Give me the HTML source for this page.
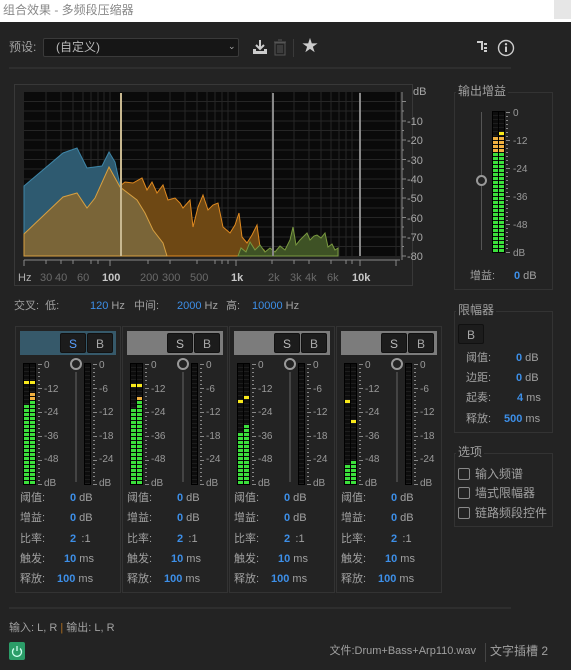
<!DOCTYPE html>
<html><head><meta charset="utf-8"><style>
*{margin:0;padding:0;box-sizing:border-box}
body{width:571px;height:670px;background:#232323;font-family:"Liberation Sans","Noto Sans CJK SC",sans-serif;font-size:11px;color:#a0a0a0;position:relative;overflow:hidden}
.a{position:absolute}
.t{position:absolute;white-space:nowrap;line-height:12px}
.v{color:#3d8fe8}
.box{position:absolute;border:1px solid #333}
.btn{position:absolute;background:#1c1c1c;border:1px solid #111;border-radius:2px;color:#a8a8a8;font-size:12px;text-align:center;line-height:20px}
.col{position:absolute;background:#0d0d0d;background-image:repeating-linear-gradient(to bottom,transparent 0 3px,#1d1d1d 3px 4px)}
.g{position:absolute;left:0;right:0;bottom:0;background:repeating-linear-gradient(to top,#3be03b 0 3px,#0d0d0d 3px 4px)}
.pk{position:absolute;left:0;right:0;height:3px}
.sc{position:absolute;color:#9a9a9a;font-size:10px}
.cb{position:absolute;width:12px;height:12px;border:1px solid #8a8a8a;border-radius:2px}
</style></head><body>
<div class="a" style="left:0;top:0;width:571px;height:22px;background:#fff"></div>
<div class="t" style="left:3px;top:4px;color:#888;font-size:12px">组合效果 - 多频段压缩器</div>
<div class="a" style="left:554px;top:0;width:17px;height:19px;background:#e6e6e6"></div>

<div class="t" style="left:9px;top:41px;font-size:12px">预设:</div>
<div class="a" style="left:43px;top:38px;width:196px;height:19px;background:#161616;border:1px solid #3a3a3a;border-radius:2px"></div>
<div class="t" style="left:56px;top:41px;font-size:12px;color:#b8b8b8">(自定义)</div>
<div class="t" style="left:228px;top:40px;font-size:9px;color:#aaa">⌄</div>
<svg class="a" style="left:250px;top:38px" width="20" height="20"><path d="M10 2v9M6 7l4 4 4-4" stroke="#ccc" stroke-width="2" fill="none"/><path d="M3 11v5h14v-5h-3v2H6v-2z" fill="#ccc"/></svg>
<svg class="a" style="left:273px;top:39px" width="14" height="18"><rect x="2" y="4" width="10" height="12" fill="none" stroke="#555"/><path d="M1 3h12M5 1h4M5 6v8M7 6v8M9 6v8" stroke="#555"/></svg>
<div class="a" style="left:293px;top:39px;width:1px;height:18px;background:#3a3a3a"></div>
<div class="t" style="left:302px;top:38px;font-size:16px;color:#ccc;line-height:18px">★</div>
<svg class="a" style="left:476px;top:40px" width="12" height="14"><path d="M1 2h5v8" stroke="#ccc" stroke-width="2" fill="none"/><rect x="8" y="3" width="3" height="2" fill="#ccc"/><rect x="8" y="7" width="3" height="2" fill="#ccc"/><rect x="8" y="10" width="3" height="2" fill="#ccc"/></svg>
<svg class="a" style="left:497px;top:39px" width="18" height="18"><circle cx="9" cy="9" r="7.5" fill="none" stroke="#ccc" stroke-width="1.4"/><rect x="8" y="7.5" width="2" height="5.5" fill="#ccc"/><circle cx="9" cy="5.2" r="1.2" fill="#ccc"/></svg>
<div class="a" style="left:9px;top:67px;width:502px;height:2px;background:#2e2e2e"></div>

<div class="box" style="left:14px;top:84px;width:399px;height:202px;border-color:#383838"></div>
<svg class="a" style="left:0;top:0" width="440" height="300">
<rect x="24" y="92" width="376" height="164" fill="#0a0a0a"/>
<g stroke="#262626" stroke-width="1">
<path d="M24 101.5H400M24 111H400M24 121H400M24 130.5H400M24 140H400M24 150H400M24 159.5H400M24 169H400M24 179H400M24 188.5H400M24 198H400M24 208H400M24 217.5H400M24 227H400M24 237H400M24 246.5H400"/>
<path d="M46 92V256M61 92V256M73 92V256M83 92V256M91 92V256M98 92V256M104 92V256M110 92V256M148 92V256M170 92V256M185 92V256M197 92V256M207 92V256M215 92V256M222 92V256M228 92V256M236 92V256M272 92V256M294 92V256M309 92V256M321 92V256M331 92V256M339 92V256M346 92V256M352 92V256M360 92V256M396 92V256"/>
</g>
<path d="M24 186L63 153L77 148L87 168L102 166L109 152L115 162L120 185L120 256L24 256Z" fill="#2e5a70" stroke="#3e86a8" stroke-width="1"/>
<path d="M120 186L125 182L133 183L142 178L147 190L152 182L157 193L163 185L168 200L175 198L180 203L183 208L190 200L193 227L198 207L203 195L208 210L213 205L218 203L223 227L230 233L235 225L239 213L242 237L247 243L252 235L257 225L260 247L264 250L267 256L120 256Z" fill="#6e4814" stroke="#e08a20" stroke-width="1"/>
<path d="M238 256L241 248L246 252L250 242L255 250L260 245L265 252L270 248L275 252L280 246L285 250L290 240L293 227L296 245L300 240L304 236L307 233L310 240L314 236L317 235L321 238L325 233L328 247L332 244L335 250L338 248L338 256Z" fill="#3e5225" stroke="#7a9a40" stroke-width="1"/>
<path d="M24 234L63 197L77 193L87 208L95 198L109 167L120 187L137 200L145 213L153 230L163 243L167 256L24 256Z" fill="#7a6538" stroke="#d8a040" stroke-width="1"/>
<path d="M121 93V256" stroke="#c8b890" stroke-width="2"/>
<path d="M273 93V256M360 93V256" stroke="#888" stroke-width="2"/>
<path d="M402 92V260M402 101.5h4M402 121h4M402 140h4M402 159.5h4M402 179h4M402 198h4M402 217.5h4M402 237h4M402 256h4M402 111h2M402 130.5h2M402 150h2M402 169h2M402 188.5h2M402 208h2M402 227h2M402 246.5h2" stroke="#888"/>
<path d="M24 260H400M24 260v6M46 260v4M61 260v4M73 260v4M91 260v4M98 260v4M110 260v6M148 260v4M170 260v4M197 260v4M215 260v4M222 260v4M228 260v4M236 260v6M272 260v4M294 260v4M309 260v4M331 260v4M346 260v4M352 260v4M360 260v6M396 260v6" stroke="#888"/>
<g font-size="11" fill="#a8a8a8" font-family="Liberation Sans,sans-serif">
<text x="413" y="95">dB</text><text x="407" y="125">-10</text><text x="407" y="144">-20</text><text x="407" y="164">-30</text><text x="407" y="183">-40</text><text x="407" y="202">-50</text><text x="407" y="222">-60</text><text x="407" y="241">-70</text><text x="407" y="260">-80</text>
<text x="18" y="281" fill="#b0b0b0">Hz</text>
<g fill="#6a6a6a"><text x="40" y="281">30</text><text x="55" y="281">40</text><text x="77" y="281">60</text><text x="140" y="281">200</text><text x="162" y="281">300</text><text x="190" y="281">500</text><text x="268" y="281">2k</text><text x="290" y="281">3k</text><text x="305" y="281">4k</text><text x="327" y="281">6k</text></g>
<g fill="#c8c8c8" font-weight="bold"><text x="102" y="281">100</text><text x="231" y="281">1k</text><text x="352" y="281">10k</text></g>
</g>
</svg>
<div class="t" style="left:14px;top:300px">交叉:&nbsp;&nbsp;低:</div>
<div class="t" style="left:90px;top:300px"><span class="v">120</span> Hz</div>
<div class="t" style="left:134px;top:300px">中间:</div>
<div class="t" style="left:177px;top:300px"><span class="v">2000</span> Hz</div>
<div class="t" style="left:226px;top:300px">高:</div>
<div class="t" style="left:252px;top:300px"><span class="v">10000</span> Hz</div>

<div id="bands"></div>

<div class="box" style="left:454px;top:92px;width:99px;height:198px"></div>
<div class="t" style="left:456px;top:85px;background:#232323;padding:0 2px;font-size:12px">输出增益</div>
<div class="a" style="left:481px;top:112px;width:1px;height:138px;background:#555"></div>
<div class="a" style="left:476px;top:175px;width:11px;height:11px;border:2px solid #999;border-radius:50%;background:#232323"></div>
<div id="out"></div>
<div class="t" style="left:470px;top:270px">增益:</div>
<div class="t" style="left:514px;top:270px"><span class="v" style="font-weight:bold">0</span> dB</div>

<div class="box" style="left:454px;top:311px;width:99px;height:122px"></div>
<div class="t" style="left:456px;top:304px;background:#232323;padding:0 2px;font-size:12px">限幅器</div>
<div class="btn" style="left:458px;top:324px;width:26px;height:20px">B</div>
<div class="t" style="left:466px;top:352px">阈值:</div><div class="t" style="left:516px;top:352px"><span class="v" style="font-weight:bold">0</span> dB</div>
<div class="t" style="left:466px;top:372px">边距:</div><div class="t" style="left:516px;top:372px"><span class="v" style="font-weight:bold">0</span> dB</div>
<div class="t" style="left:466px;top:392px">起奏:</div><div class="t" style="left:517px;top:392px"><span class="v" style="font-weight:bold">4</span> ms</div>
<div class="t" style="left:466px;top:413px">释放:</div><div class="t" style="left:504px;top:413px"><span class="v" style="font-weight:bold">500</span> ms</div>

<div class="box" style="left:454px;top:453px;width:99px;height:74px"></div>
<div class="t" style="left:456px;top:446px;background:#232323;padding:0 2px;font-size:12px">选项</div>
<div class="cb" style="left:458px;top:468px"></div><div class="t" style="left:475px;top:468px;font-size:12px">输入频谱</div>
<div class="cb" style="left:458px;top:487px"></div><div class="t" style="left:475px;top:487px;font-size:12px">墙式限幅器</div>
<div class="cb" style="left:458px;top:507px"></div><div class="t" style="left:475px;top:507px;font-size:12px">链路频段控件</div>

<div class="a" style="left:9px;top:607px;width:502px;height:2px;background:#2e2e2e"></div>
<div class="t" style="left:9px;top:622px">输入: L, R <span style="color:#b07020">|</span> 输出: L, R</div>
<div class="a" style="left:9px;top:642px;width:16px;height:18px;background:#2b9d68;border-radius:2px"></div>
<svg class="a" style="left:9px;top:642px" width="16" height="18"><path d="M5 6.5a4.5 4.5 0 1 0 6 0" stroke="#cfe" stroke-width="1.3" fill="none"/><path d="M8 4v5" stroke="#cfe" stroke-width="1.3"/></svg>
<div class="t" style="right:95px;top:645px;font-size:11px;text-align:right">文件:Drum+Bass+Arp110.wav</div>
<div class="a" style="left:485px;top:643px;width:1px;height:19px;background:#444"></div>
<div class="t" style="left:490px;top:645px;font-size:12px">文字插槽 2</div>

<script>
function meter(x,y,w,h,cols){let s='';cols.forEach((c,i)=>{let cx=x+1+i*(w+1);s+=`<div class="col" style="left:${cx}px;top:${y}px;width:${w}px;height:${h}px">`;
if(c.g)s+=`<div class="g" style="height:${c.g}px"></div>`;
if(c.o)s+=`<div class="g" style="bottom:${c.g}px;height:${c.o}px;background:repeating-linear-gradient(to top,#f0b040 0 3px,#0d0d0d 3px 4px)"></div>`;
if(c.p!=null)s+=`<div class="pk" style="top:${c.p}px;background:#f8e81a"></div>`;
s+='</div>'});return `<div class="a" style="left:${x}px;top:${y-1}px;width:${cols.length*(w+1)+1}px;height:${h+2}px;background:#000"></div>`+s;}
const data=[
{c1:[{g:80,p:17},{g:84,o:8,p:17}],hd:'#36596a',s:'#5aa0ff'},
{c1:[{g:76,p:20},{g:84,o:4,p:20}],hd:'#7c7c7c',s:'#bbb'},
{c1:[{g:52,p:36},{g:60,p:32}],hd:'#7c7c7c',s:'#bbb'},
{c1:[{g:20,p:36},{g:24,p:56}],hd:'#7c7c7c',s:'#bbb'}];
let html='';
data.forEach((d,i)=>{let L=15+i*107;
html+=`<div class="box" style="left:${L}px;top:326px;width:106px;height:267px"></div>`;
html+=`<div class="a" style="left:${L+5}px;top:331px;width:96px;height:24px;background:${d.hd}"></div>`;
html+=`<div class="btn" style="left:${L+45}px;top:333px;width:26px;height:20px;color:${d.s}">S</div><div class="btn" style="left:${L+72}px;top:333px;width:26px;height:20px">B</div>`;
html+=meter(L+8,364,5,120,d.c1);
html+=meter(L+69,364,5,120,[{}]);
html+=`<div class="a" style="left:${L+55}px;top:358px;width:12px;height:12px;border:2px solid #999;border-radius:50%"></div><div class="a" style="left:${L+60}px;top:372px;width:2px;height:110px;background:#444"></div>`;
const l1=['0','-12','-24','-36','-48','dB'],l2=['0','-6','-12','-18','-24','dB'];
for(let k=0;k<6;k++){let y=360+k*23.5;
html+=`<div class="sc" style="left:${L+29}px;top:${y}px">${l1[k]}</div><div class="sc" style="left:${L+84}px;top:${y}px">${l2[k]}</div>`;}
for(let k=0;k<=30;k++){let y=364+k*4;html+=`<div class="a" style="left:${L+23}px;top:${y}px;width:${k%6==0?4:2}px;height:1px;background:#888"></div><div class="a" style="left:${L+78}px;top:${y}px;width:${k%6==0?4:2}px;height:1px;background:#888"></div>`;}
const rows=[['阈值','0','dB',L+55],['增益','0','dB',L+55],['比率','2','&thinsp;:1',L+55],['触发','10','ms',L+49],['释放','100','ms',L+42]];
rows.forEach((r,k)=>{let y=492+k*20.3;html+=`<div class="t" style="left:${L+5}px;top:${y}px">${r[0]}:</div><div class="t" style="left:${r[3]}px;top:${y}px"><span class="v" style="font-weight:bold">${r[1]}</span> ${r[2]}</div>`;});
});
document.getElementById('bands').innerHTML=html;
let o=meter(492,112,5,140,[{g:100,o:16},{g:100,o:16,p:20}]);
const lo=['0','-12','-24','-36','-48','dB'];
for(let k=0;k<6;k++)o+=`<div class="sc" style="left:513px;top:${108+k*28}px">${lo[k]}</div>`;
for(let k=0;k<=35;k++)o+=`<div class="a" style="left:506px;top:${112+k*4}px;width:${k%7==0?4:2}px;height:1px;background:#888"></div>`;
document.getElementById('out').innerHTML=o;
</script>
</body></html>
